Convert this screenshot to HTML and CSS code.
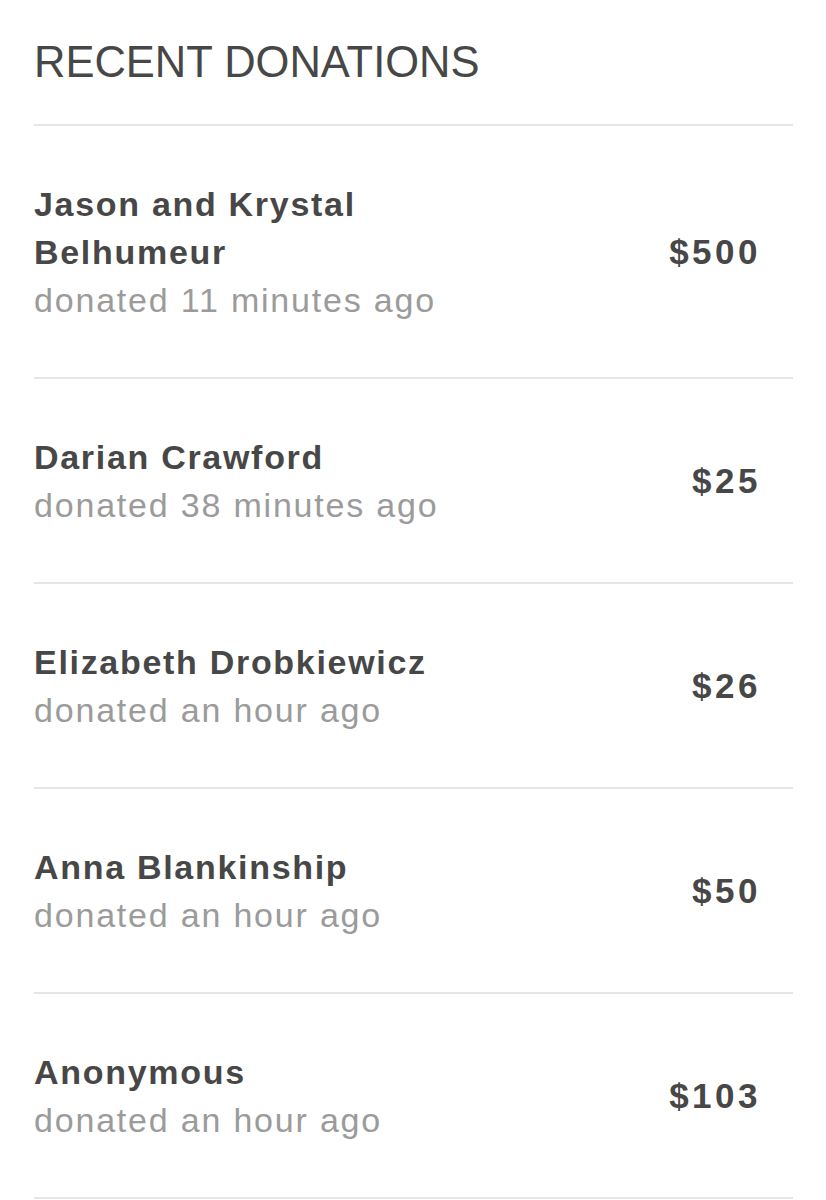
FILE: index.html
```html
<!DOCTYPE html>
<html>
<head>
  <title>Recent Donations</title>
  <link rel="stylesheet" href="styles.css">
</head>
<body>
  <div class="donations">
    <h1 class="donations-title">RECENT DONATIONS</h1>

    <div class="donation">
      <div class="donor">
        <div class="donor-name">Jason and Krystal<br>Belhumeur</div>
        <div class="donor-time">donated 11 minutes ago</div>
      </div>
      <div class="amount">$500</div>
    </div>

    <div class="donation">
      <div class="donor">
        <div class="donor-name">Darian Crawford</div>
        <div class="donor-time">donated 38 minutes ago</div>
      </div>
      <div class="amount">$25</div>
    </div>

    <div class="donation">
      <div class="donor">
        <div class="donor-name">Elizabeth Drobkiewicz</div>
        <div class="donor-time">donated an hour ago</div>
      </div>
      <div class="amount">$26</div>
    </div>

    <div class="donation">
      <div class="donor">
        <div class="donor-name">Anna Blankinship</div>
        <div class="donor-time">donated an hour ago</div>
      </div>
      <div class="amount">$50</div>
    </div>

    <div class="donation">
      <div class="donor">
        <div class="donor-name">Anonymous</div>
        <div class="donor-time">donated an hour ago</div>
      </div>
      <div class="amount">$103</div>
    </div>
  </div>
</body>
</html>
```

FILE: styles.css
```css
body {
  margin: 0;
  background-color: #fff;
  font-family: "Liberation Sans", Arial, sans-serif;
  color: #474747;
}

.donations {
  padding: 0 33px 0 34px;
}

.donations-title {
  margin: 0;
  padding-top: 36px;
  height: 126px;
  box-sizing: border-box;
  font-size: 43.5px;
  font-weight: normal;
  line-height: 52px;
  border-bottom: 2px solid #e6e6e6;
}

.donation {
  display: flex;
  justify-content: space-between;
  align-items: center;
  padding: 54px 32px 53px 0;
  border-bottom: 2px solid #e6e6e6;
}

.donor-name {
  font-size: 34px;
  font-weight: bold;
  line-height: 48px;
  letter-spacing: 1.7px;
}

.donor-time {
  font-size: 34px;
  line-height: 48px;
  letter-spacing: 1.8px;
  color: #9b9b9b;
}

.amount {
  font-size: 35px;
  font-weight: bold;
  letter-spacing: 3.5px;
}
```
